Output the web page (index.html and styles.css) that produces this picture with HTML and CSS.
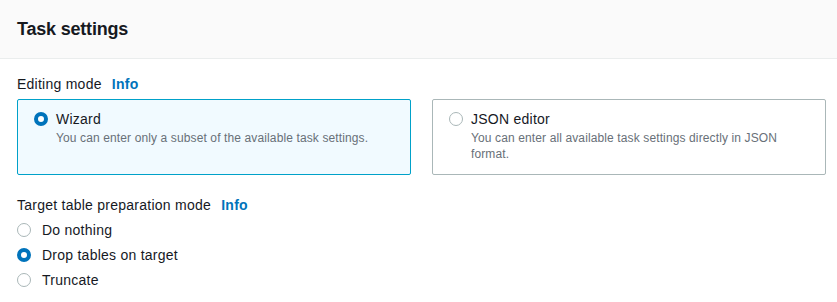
FILE: index.html
```html
<!DOCTYPE html>
<html>
<head>
<meta charset="utf-8">
<link rel="stylesheet" href="styles.css">
</head>
<body>
<div class="panel">
  <div class="header"><h2 class="title">Task settings</h2></div>
  <div class="content">
    <div class="field">
      <div class="label">Editing mode <span class="info">Info</span></div>
      <div class="tiles">
        <div class="tile selected">
          <span class="radio checked"></span>
          <div class="tile-text">
            <div class="tile-title">Wizard</div>
            <div class="tile-desc">You can enter only a subset of the available task settings.</div>
          </div>
        </div>
        <div class="tile">
          <span class="radio"></span>
          <div class="tile-text">
            <div class="tile-title">JSON editor</div>
            <div class="tile-desc">You can enter all available task settings directly in JSON format.</div>
          </div>
        </div>
      </div>
    </div>
    <div class="field field2">
      <div class="label">Target table preparation mode <span class="info">Info</span></div>
      <div class="options">
        <div class="option"><span class="radio"></span><span>Do nothing</span></div>
        <div class="option"><span class="radio checked"></span><span>Drop tables on target</span></div>
        <div class="option"><span class="radio"></span><span>Truncate</span></div>
      </div>
    </div>
  </div>
</div>
</body>
</html>
```

FILE: styles.css
```css
* { box-sizing: border-box; }
html, body { margin: 0; padding: 0; background: #fff; }
body {
  font-family: "Liberation Sans", Arial, sans-serif;
  color: #16191f;
  font-size: 14px;
  letter-spacing: 0.25px;
}
.header {
  height: 59px;
  background: #fafafa;
  border-bottom: 1px solid #eaeded;
  padding: 0 17px;
  display: flex;
  align-items: center;
}
.title {
  margin: 0;
  font-size: 18px;
  font-weight: 700;
  line-height: 22px;
  padding-bottom: 1px;
  letter-spacing: -0.2px;
}
.content {
  padding: 15px 11px 0 17px;
}
.label {
  line-height: 20px;
  height: 20px;
}
.info {
  color: #0073bb;
  font-weight: 700;
  margin-left: 6px;
}
.tiles {
  margin-top: 5px;
  display: grid;
  grid-template-columns: 1fr 1fr;
  gap: 21px;
}
.tile {
  border: 1px solid #aab7b8;
  border-radius: 2px;
  padding: 9px 16px 11px 16px;
  display: flex;
  align-items: flex-start;
  gap: 8px;
  min-height: 76px;
}
.tile.selected {
  border-color: #00a1c9;
  background: #f1faff;
}
.tile .radio { margin-top: 3px; }
.tile-title {
  line-height: 20px;
}
.tile-desc {
  font-size: 12px;
  line-height: 16px;
  color: #687078;
  margin-top: 1px;
  letter-spacing: 0.12px;
}
.radio {
  width: 14px;
  height: 14px;
  border-radius: 50%;
  border: 1px solid #aab7b8;
  background: #fff;
  flex: none;
  display: inline-block;
}
.radio.checked {
  border: 4px solid #0073bb;
}
.field2 { margin-top: 20px; }
.options {
  margin-top: 2px;
  display: flex;
  flex-direction: column;
}
.option {
  display: flex;
  align-items: center;
  gap: 11px;
  height: 25px;
}
```
